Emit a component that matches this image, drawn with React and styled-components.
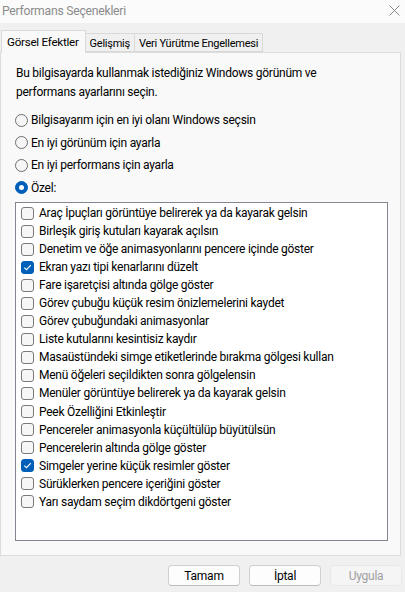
import styled, { createGlobalStyle } from "styled-components";
import { useState } from "react";

const GlobalStyle = createGlobalStyle`
  html, body {
    margin: 0;
    padding: 0;
    background: #f0f0f0;
  }
  body {
    font-family: Roboto, "Noto Sans", "Liberation Sans", sans-serif;
    font-size: 12px;
    letter-spacing: -0.25px;
    color: #000;
  }
  * { box-sizing: border-box; }
`;

const Window = styled.div`
  width: 405px;
  height: 592px;
  display: flex;
  flex-direction: column;
  background: #f0f0f0;
  overflow: hidden;
`;

const TitleBar = styled.div`
  height: 23px;
  flex: none;
  display: flex;
  align-items: center;
  justify-content: space-between;
  padding: 0 5px 2px 2px;
  background: #fbfbfb;
`;

const Title = styled.span`
  font-size: 12.2px;
  color: #8c8c8c;
`;

const CloseIcon = styled.svg`
  width: 11px;
  height: 11px;
  margin-top: -1px;
`;

const TabStrip = styled.div`
  height: 21px;
  margin-top: 8px;
  flex: none;
  display: flex;
  align-items: flex-end;
  padding-left: 1px;
`;

const Tab = styled.div`
  position: relative;
  display: flex;
  align-items: center;
  padding: 0 ${(p) => (p.$active ? 6 : 4)}px 0 ${(p) => (p.$active ? 5 : 4)}px;
  height: ${(p) => (p.$active ? 23 : 19)}px;
  margin-bottom: ${(p) => (p.$active ? -1 : 0)}px;
  margin-left: ${(p) => (p.$first ? 0 : -1)}px;
  background: ${(p) => (p.$active ? "#f9f9f9" : "#f0f0f0")};
  border: 1px solid #d9d9d9;
  border-bottom: ${(p) => (p.$active ? "none" : "1px solid #d9d9d9")};
  z-index: ${(p) => (p.$active ? 2 : 1)};
  font-size: ${(p) => (p.$active ? 11.6 : 11)}px;
  padding-top: ${(p) => (p.$active ? 0 : 1)}px;
`;

const Panel = styled.div`
  height: 504px;
  width: 401px;
  flex: none;
  background: #f9f9f9;
  border: 1px solid #dcdcdc;
  padding: 11px 12px 0 14px;
  display: flex;
  flex-direction: column;
`;

const Description = styled.p`
  margin: 0 0 0 1px;
  line-height: 19px;
`;

const RadioGroup = styled.div`
  margin-top: 7px;
  display: flex;
  flex-direction: column;
`;

const RadioRow = styled.label`
  height: 22.5px;
  display: flex;
  align-items: center;
  gap: 3px;
  cursor: default;
`;

const RadioDot = styled.span`
  width: 13px;
  height: 13px;
  border-radius: 50%;
  flex: none;
  display: flex;
  align-items: center;
  justify-content: center;
  background: ${(p) => (p.$on ? "#005fb8" : "#f6f6f6")};
  border: 1px solid ${(p) => (p.$on ? "#005fb8" : "#6e6e6e")};

  &::after {
    content: "";
    display: ${(p) => (p.$on ? "block" : "none")};
    width: 5px;
    height: 5px;
    border-radius: 50%;
    background: #fff;
  }
`;

const ListBox = styled.div`
  margin-top: 3px;
  height: 339px;
  background: #fff;
  border: 1px solid #828790;
  padding: 1px 0 0 5px;
  display: flex;
  flex-direction: column;
`;

const CheckRow = styled.label`
  height: 18.05px;
  flex: none;
  display: flex;
  align-items: center;
  gap: 5px;
  white-space: nowrap;
  cursor: default;
`;

const Box = styled.span`
  width: 13px;
  height: 13px;
  flex: none;
  border-radius: 3px;
  display: flex;
  align-items: center;
  justify-content: center;
  background: ${(p) => (p.$on ? "#005fb8" : "#f6f6f6")};
  border: 1px solid ${(p) => (p.$on ? "#005fb8" : "#7a7a7a")};
`;

const Footer = styled.div`
  flex: 1;
  display: flex;
  justify-content: flex-end;
  gap: 9px;
  padding: 9px 3px 0 0;
`;

const Button = styled.button`
  width: 72px;
  height: 21px;
  font-family: inherit;
  font-size: 12px;
  letter-spacing: inherit;
  border-radius: 4px;
  padding: 0;
  background: ${(p) => (p.disabled ? "#f5f5f5" : "#fdfdfd")};
  color: ${(p) => (p.disabled ? "#a0a0a0" : "#000")};
  border: 1px solid ${(p) => (p.disabled ? "#e8e8e8" : "#d0d0d0")};
  border-bottom-color: ${(p) => (p.disabled ? "#e8e8e8" : "#bdbdbd")};
`;

const options = [
  "Bilgisayarım için en iyi olanı Windows seçsin",
  "En iyi görünüm için ayarla",
  "En iyi performans için ayarla",
  "Özel:",
];

const effects = [
  ["Araç İpuçları görüntüye belirerek ya da kayarak gelsin", false],
  ["Birleşik giriş kutuları kayarak açılsın", false],
  ["Denetim ve öğe animasyonlarını pencere içinde göster", false],
  ["Ekran yazı tipi kenarlarını düzelt", true],
  ["Fare işaretçisi altında gölge göster", false],
  ["Görev çubuğu küçük resim önizlemelerini kaydet", false],
  ["Görev çubuğundaki animasyonlar", false],
  ["Liste kutularını kesintisiz kaydır", false],
  ["Masaüstündeki simge etiketlerinde bırakma gölgesi kullan", false],
  ["Menü öğeleri seçildikten sonra gölgelensin", false],
  ["Menüler görüntüye belirerek ya da kayarak gelsin", false],
  ["Peek Özelliğini Etkinleştir", false],
  ["Pencereler animasyonla küçültülüp büyütülsün", false],
  ["Pencerelerin altında gölge göster", false],
  ["Simgeler yerine küçük resimler göster", true],
  ["Sürüklerken pencere içeriğini göster", false],
  ["Yarı saydam seçim dikdörtgeni göster", false],
];

function Check() {
  return (
    <svg width="9" height="9" viewBox="0 0 9 9">
      <path d="M1.3 4.6 L3.5 6.7 L7.8 2.2" fill="none" stroke="#fff" strokeWidth="1.1" />
    </svg>
  );
}

export default function App() {
  const [mode, setMode] = useState(3);
  const [checks, setChecks] = useState(effects.map((e) => e[1]));

  const toggle = (i) => setChecks((prev) => prev.map((v, j) => (j === i ? !v : v)));

  return (
    <Window>
      <GlobalStyle />
      <TitleBar>
        <Title>Performans Seçenekleri</Title>
        <CloseIcon viewBox="0 0 11 11">
          <path d="M0.5 0.5 L10.5 10.5 M10.5 0.5 L0.5 10.5" stroke="#8a8a8a" strokeWidth="1" />
        </CloseIcon>
      </TitleBar>

      <TabStrip>
        <Tab $active $first>Görsel Efektler</Tab>
        <Tab>Gelişmiş</Tab>
        <Tab>Veri Yürütme Engellemesi</Tab>
      </TabStrip>

      <Panel>
        <Description>
          Bu bilgisayarda kullanmak istediğiniz Windows görünüm ve
          <br />
          performans ayarlarını seçin.
        </Description>

        <RadioGroup>
          {options.map((o, i) => (
            <RadioRow key={o} onClick={() => setMode(i)}>
              <RadioDot $on={mode === i} />
              {o}
            </RadioRow>
          ))}
        </RadioGroup>

        <ListBox>
          {effects.map(([label], i) => (
            <CheckRow key={label} onClick={() => toggle(i)}>
              <Box $on={checks[i]}>{checks[i] && <Check />}</Box>
              {label}
            </CheckRow>
          ))}
        </ListBox>
      </Panel>

      <Footer>
        <Button>Tamam</Button>
        <Button>İptal</Button>
        <Button disabled>Uygula</Button>
      </Footer>
    </Window>
  );
}
